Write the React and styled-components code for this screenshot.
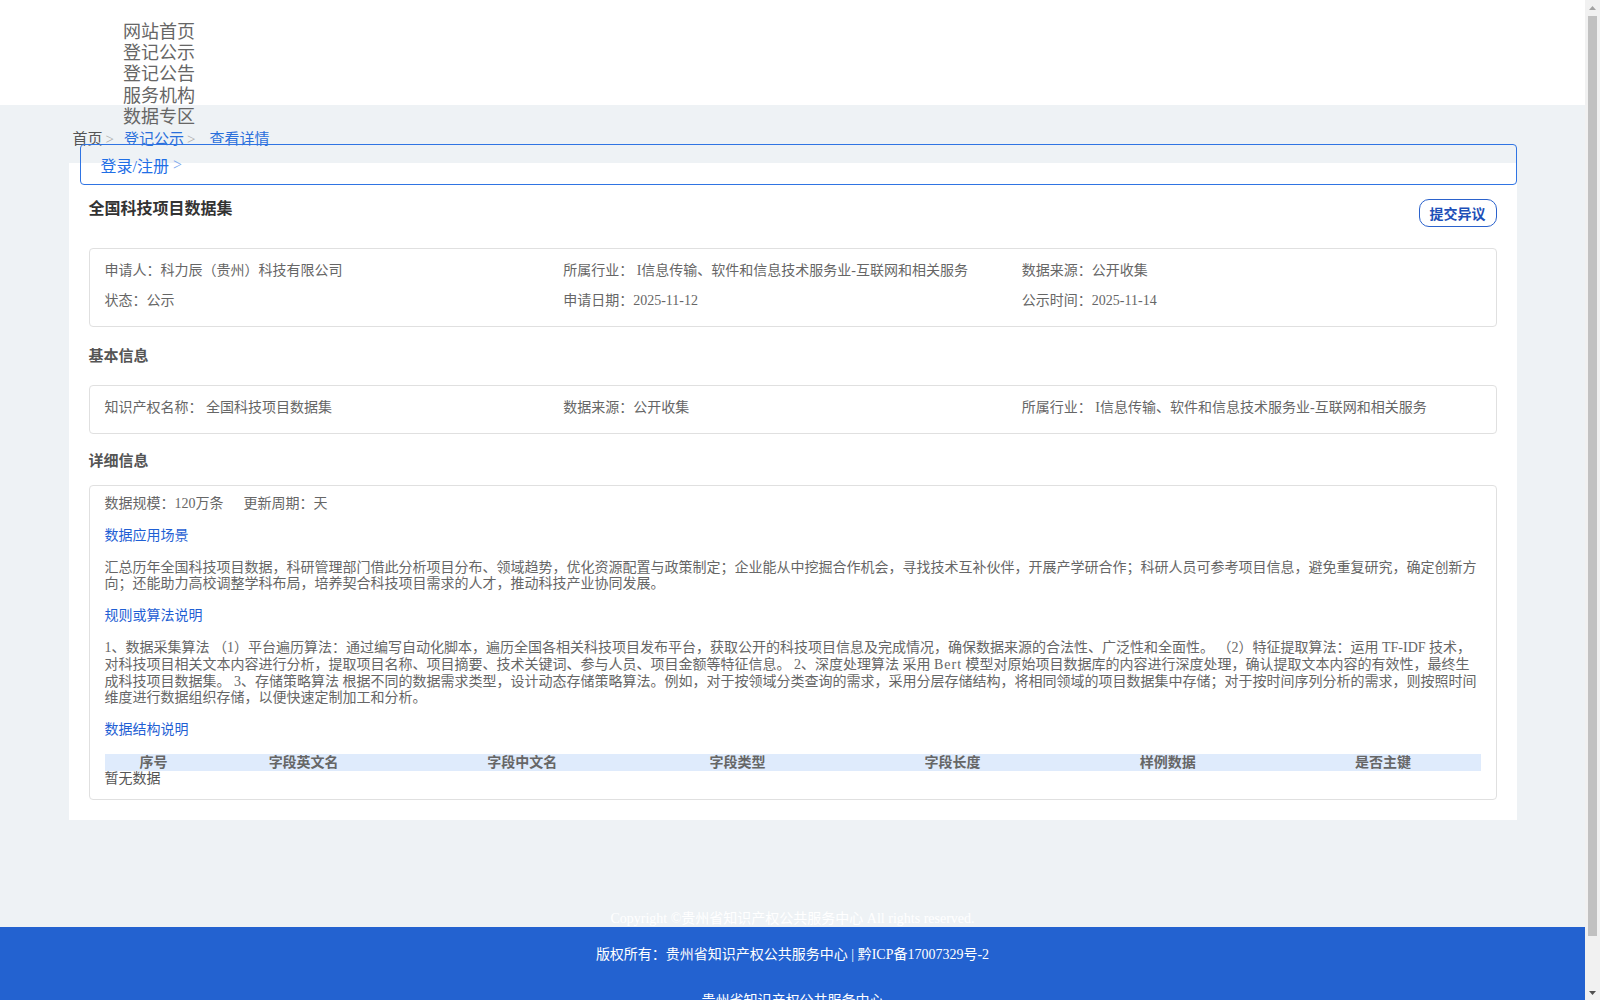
import React from "react";
import styled, { createGlobalStyle } from "styled-components";

const GlobalStyle = createGlobalStyle`
  html, body {
    margin: 0;
    padding: 0;
  }
  body {
    background: #eef2f5;
    font-family: "Liberation Serif", "Noto Sans CJK SC", serif;
    color: #666;
  }
  * {
    box-sizing: border-box;
  }
`;

// page body, leaving room for the window scrollbar on the right
const Page = styled.div`
  margin-right: 15px;
`;

const ScrollTrack = styled.div`
  position: fixed;
  top: 0;
  right: 0;
  width: 15px;
  height: 100vh;
  background: #f1f1f1;
  display: flex;
  flex-direction: column;
  align-items: center;
`;

const ScrollButton = styled.div`
  height: 15px;
  width: 15px;
  display: flex;
  align-items: center;
  justify-content: center;
`;

const ScrollThumb = styled.div`
  width: 9px;
  height: 920px;
  margin-top: 1px;
  background: #c1c1c1;
`;

const ScrollSpacer = styled.div`
  flex: 1;
`;

const Header = styled.header`
  height: 105px;
  background: #fff;
  position: relative;
`;

const NavList = styled.ul`
  margin: 0;
  padding: 22px 0 0 123px;
  list-style: none;
`;

const NavItem = styled.li`
  font-size: 18px;
  line-height: 21.2px;
  color: #666;
`;

const Container = styled.div`
  width: 1448px;
  margin: 0 auto;
`;

const Breadcrumb = styled.div`
  padding: 25px 0 0 4px;
  font-size: 15px;
  line-height: 18px;
  display: flex;
  align-items: center;
`;

const Crumb = styled.span`
  color: ${(p) => (p.$active ? "#2a6fdb" : "#555")};
`;

const Sep = styled.span`
  color: #aaa;
  margin: 0 ${(p) => p.$gap || 10}px 0 3px;
`;

const LoginBar = styled.div`
  position: relative;
  z-index: 1;
  margin: -4px 0 -22px 11px;
  height: 41px;
  border: 1px solid #2f74e3;
  border-radius: 4px;
  padding-left: 20px;
  display: flex;
  align-items: center;
  font-size: 16px;
  color: #1f6fe6;
`;

const LoginArrow = styled.span`
  color: #7aa6ee;
  margin-left: 4px;
`;

const Card = styled.main`
  background: #fff;
  padding: 36px 20px 20px;
`;

const TitleRow = styled.div`
  display: flex;
  justify-content: space-between;
  align-items: flex-start;
  margin-bottom: 21px;
`;

const Title = styled.h1`
  margin: 0;
  font-size: 16px;
  line-height: 20px;
  font-weight: bold;
  color: #333;
`;

const ObjectionButton = styled.button`
  height: 28px;
  padding: 0 10px;
  border: 1px solid #2b62cc;
  border-radius: 10px;
  background: #fff;
  color: #1d4fb8;
  font-family: inherit;
  font-size: 14px;
  font-weight: bold;
  cursor: pointer;
`;

const InfoBox = styled.div`
  border: 1px solid #e0e0e0;
  border-radius: 4px;
  padding: 13px 15px 4px;
`;

const InfoGrid = styled.div`
  display: grid;
  grid-template-columns: repeat(3, 1fr);
  row-gap: 13px;
  margin-bottom: 13px;
  font-size: 14px;
  line-height: 17px;
  color: #666;
`;

const SectionTitle = styled.h2`
  margin: ${(p) => p.$before || 19}px 0 ${(p) => p.$after || 20}px;
  font-size: 15px;
  line-height: 20px;
  font-weight: bold;
  color: #555;
`;

const DetailBox = styled.div`
  border: 1px solid #e0e0e0;
  border-radius: 4px;
  padding: 10px 15px 11px;
  font-size: 14px;
  line-height: 16.8px;
  color: #666;
`;

const MetaLine = styled.div`
  display: flex;
  gap: 20px;
`;

const SubTitle = styled.div`
  margin-top: 15px;
  color: #1f5fd4;
`;

const Paragraph = styled.p`
  margin: 15px 0 0;
  color: #666;
`;

// model names set a touch looser than the running text
const Term = styled.span`
  letter-spacing: 1px;
`;

const FieldTable = styled.table`
  width: 100%;
  margin-top: 15px;
  border-collapse: collapse;
  table-layout: fixed;
`;

const Th = styled.th`
  background: #dfebfc;
  padding: 0 0 0 20px;
  font-size: 14px;
  line-height: 17px;
  font-weight: bold;
  color: #666;
  text-align: center;
  width: ${(p) => p.$w}px;
`;

const Empty = styled.div`
  color: #555;
`;

const Copyright = styled.div`
  margin-top: 91px;
  text-align: center;
  font-size: 14px;
  line-height: 16px;
  color: #fff;
`;

const Footer = styled.footer`
  background: #2362d0;
  padding: 18px 0 19px;
  text-align: center;
  font-size: 14px;
  line-height: 20px;
  color: #fff;
`;

const FooterLine = styled.div`
  margin-bottom: 26px;
`;

const navItems = ["网站首页", "登记公示", "登记公告", "服务机构", "数据专区"];

const headInfo = [
  ["申请人：", "科力辰（贵州）科技有限公司"],
  ["所属行业：", " I信息传输、软件和信息技术服务业-互联网和相关服务"],
  ["数据来源：", "公开收集"],
  ["状态：", "公示"],
  ["申请日期：", "2025-11-12"],
  ["公示时间：", "2025-11-14"],
];

const basicInfo = [
  ["知识产权名称：", " 全国科技项目数据集"],
  ["数据来源：", "公开收集"],
  ["所属行业：", " I信息传输、软件和信息技术服务业-互联网和相关服务"],
];

const columns = [
  { title: "序号", width: 78 },
  { title: "字段英文名", width: 222 },
  { title: "字段中文名", width: 215 },
  { title: "字段类型", width: 215 },
  { title: "字段长度", width: 215 },
  { title: "样例数据", width: 215 },
  { title: "是否主键", width: 215 },
];

function Arrow({ up, color }) {
  return (
    <svg width="7" height="4" viewBox="0 0 7 4">
      <polygon points={up ? "0,4 7,4 3.5,0" : "0,0 7,0 3.5,4"} fill={color} />
    </svg>
  );
}

export default function App() {
  return (
    <>
      <GlobalStyle />
      <Page>
        <Header>
          <NavList>
            {navItems.map((item) => (
              <NavItem key={item}>{item}</NavItem>
            ))}
          </NavList>
        </Header>

        <Container>
          <Breadcrumb>
            <Crumb>首页</Crumb>
            <Sep>&gt;</Sep>
            <Crumb $active>登记公示</Crumb>
            <Sep $gap={14}>&gt;</Sep>
            <Crumb $active>查看详情</Crumb>
          </Breadcrumb>

          <LoginBar>
            登录/注册<LoginArrow>&gt;</LoginArrow>
          </LoginBar>

          <Card>
            <TitleRow>
              <Title>全国科技项目数据集</Title>
              <ObjectionButton>提交异议</ObjectionButton>
            </TitleRow>

            <InfoBox>
              <InfoGrid>
                {headInfo.map(([label, value]) => (
                  <div key={label}>
                    {label}
                    {value}
                  </div>
                ))}
              </InfoGrid>
            </InfoBox>

            <SectionTitle $after={19}>基本信息</SectionTitle>
            <InfoBox>
              <InfoGrid>
                {basicInfo.map(([label, value]) => (
                  <div key={label}>
                    {label}
                    {value}
                  </div>
                ))}
              </InfoGrid>
            </InfoBox>

            <SectionTitle $before={17} $after={14}>
              详细信息
            </SectionTitle>
            <DetailBox>
              <MetaLine>
                <span>数据规模：120万条</span>
                <span>更新周期：天</span>
              </MetaLine>

              <SubTitle>数据应用场景</SubTitle>
              <Paragraph>
                汇总历年全国科技项目数据，科研管理部门借此分析项目分布、领域趋势，优化资源配置与政策制定；企业能从中挖掘合作机会，寻找技术互补伙伴，开展产学研合作；科研人员可参考项目信息，避免重复研究，确定创新方向；还能助力高校调整学科布局，培养契合科技项目需求的人才，推动科技产业协同发展。
              </Paragraph>

              <SubTitle>规则或算法说明</SubTitle>
              <Paragraph>
                1、数据采集算法 （1）平台遍历算法：通过编写自动化脚本，遍历全国各相关科技项目发布平台，获取公开的科技项目信息及完成情况，确保数据来源的合法性、广泛性和全面性。 （2）特征提取算法：运用 TF-IDF 技术，对科技项目相关文本内容进行分析，提取项目名称、项目摘要、技术关键词、参与人员、项目金额等特征信息。 2、深度处理算法 采用 <Term>Bert</Term> 模型对原始项目数据库的内容进行深度处理，确认提取文本内容的有效性，最终生成科技项目数据集。 3、存储策略算法 根据不同的数据需求类型，设计动态存储策略算法。例如，对于按领域分类查询的需求，采用分层存储结构，将相同领域的项目数据集中存储；对于按时间序列分析的需求，则按照时间维度进行数据组织存储，以便快速定制加工和分析。
              </Paragraph>

              <SubTitle>数据结构说明</SubTitle>
              <FieldTable>
                <thead>
                  <tr>
                    {columns.map((col) => (
                      <Th key={col.title} $w={col.width}>
                        {col.title}
                      </Th>
                    ))}
                  </tr>
                </thead>
              </FieldTable>
              <Empty>暂无数据</Empty>
            </DetailBox>
          </Card>
        </Container>

        <Copyright>Copyright ©贵州省知识产权公共服务中心 All rights reserved.</Copyright>
        <Footer>
          <FooterLine>版权所有：贵州省知识产权公共服务中心 | 黔ICP备17007329号-2</FooterLine>
          <FooterLine>贵州省知识产权公共服务中心</FooterLine>
        </Footer>
      </Page>

      <ScrollTrack>
        <ScrollButton>
          <Arrow up color="#a3a3a3" />
        </ScrollButton>
        <ScrollThumb />
        <ScrollSpacer />
        <ScrollButton>
          <Arrow color="#505050" />
        </ScrollButton>
      </ScrollTrack>
    </>
  );
}
